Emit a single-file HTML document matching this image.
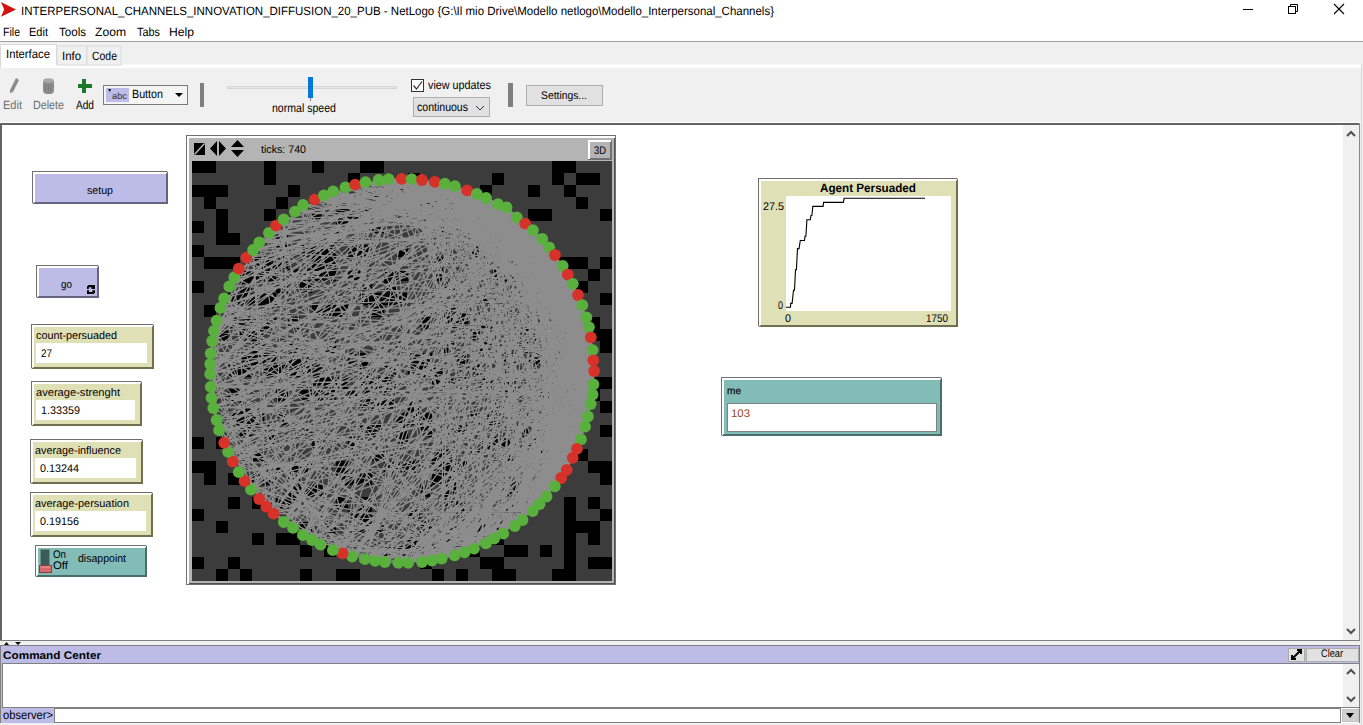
<!DOCTYPE html>
<html><head><meta charset="utf-8"><style>html,body{margin:0;padding:0;background:#fff;overflow:hidden}svg{display:block}</style></head>
<body><svg width="1363" height="725" viewBox="0 0 1363 725" shape-rendering="auto" text-rendering="geometricPrecision">
<rect x="0" y="0" width="1363" height="41" fill="#ffffff" />
<path d="M1,2 L16,9.5 L1,16.8 L4.2,9.5 Z" fill="#d41212"/>
<text x="21" y="15" font-size="12" font-family="Liberation Sans" font-weight="normal" fill="#000" textLength="753.0" lengthAdjust="spacingAndGlyphs" >INTERPERSONAL_CHANNELS_INNOVATION_DIFFUSION_20_PUB - NetLogo {G:\Il mio Drive\Modello netlogo\Modello_Interpersonal_Channels}</text>
<line x1="1243" y1="9.5" x2="1253" y2="9.5" stroke="#000" stroke-width="1"/>
<rect x="1288.5" y="6.5" width="7" height="7" fill="none" stroke="#000"/><path d="M1290.5,6.5 V4.5 H1297.5 V11.5 H1295.5" fill="none" stroke="#000"/>
<path d="M1334,4 L1344,14 M1344,4 L1334,14" stroke="#000" stroke-width="1.1"/>
<text x="3" y="36" font-size="12" font-family="Liberation Sans" font-weight="normal" fill="#000" textLength="17.0" lengthAdjust="spacingAndGlyphs" >File</text>
<text x="29" y="36" font-size="12" font-family="Liberation Sans" font-weight="normal" fill="#000" textLength="19.0" lengthAdjust="spacingAndGlyphs" >Edit</text>
<text x="59" y="36" font-size="12" font-family="Liberation Sans" font-weight="normal" fill="#000" textLength="27.0" lengthAdjust="spacingAndGlyphs" >Tools</text>
<text x="95" y="36" font-size="12" font-family="Liberation Sans" font-weight="normal" fill="#000" textLength="31.0" lengthAdjust="spacingAndGlyphs" >Zoom</text>
<text x="137" y="36" font-size="12" font-family="Liberation Sans" font-weight="normal" fill="#000" textLength="23.0" lengthAdjust="spacingAndGlyphs" >Tabs</text>
<text x="169" y="36" font-size="12" font-family="Liberation Sans" font-weight="normal" fill="#000" textLength="25.0" lengthAdjust="spacingAndGlyphs" >Help</text>
<rect x="0" y="41" width="1363" height="1" fill="#a0a0a0" />
<rect x="0" y="42" width="1363" height="26" fill="#f0f0f0" />
<rect x="0" y="64.5" width="1363" height="3.5" fill="#ffffff" />
<rect x="57" y="46" width="30" height="19" fill="#f0f0f0" stroke="#d9d9d9" stroke-width="1"/>
<rect x="87" y="46" width="34" height="19" fill="#f0f0f0" stroke="#d9d9d9" stroke-width="1"/>
<path d="M0.5,68 V44.5 H56.5 V68" fill="#ffffff" stroke="#d9d9d9"/>
<rect x="1" y="65" width="56" height="3" fill="#ffffff" />
<text x="6" y="58" font-size="12" font-family="Liberation Sans" font-weight="normal" fill="#000" textLength="44.0" lengthAdjust="spacingAndGlyphs" >Interface</text>
<text x="62" y="60" font-size="12" font-family="Liberation Sans" font-weight="normal" fill="#000" textLength="19.0" lengthAdjust="spacingAndGlyphs" >Info</text>
<text x="92" y="60" font-size="12" font-family="Liberation Sans" font-weight="normal" fill="#000" textLength="25.0" lengthAdjust="spacingAndGlyphs" >Code</text>
<rect x="0" y="68" width="1363" height="55" fill="#f0f0f0" />
<rect x="0" y="122" width="1363" height="1" fill="#ffffff" />
<path d="M16,78 L19,80 L13,92 L10,93 L10,90 Z" fill="#8c8c8c"/>
<rect x="43" y="79" width="11" height="15" rx="4" fill="#8c8c8c"/><ellipse cx="48.5" cy="80.5" rx="5" ry="2.3" fill="#a8a8a8"/><path d="M46,84 V92 M48.5,84 V92 M51,84 V92" stroke="#7a7a7a" stroke-width="0.8"/>
<rect x="82" y="79" width="4" height="14" fill="#1a7a28" />
<rect x="78" y="84" width="14" height="4" fill="#1a7a28" />
<text x="3" y="109" font-size="12" font-family="Liberation Sans" font-weight="normal" fill="#6d6d6d" textLength="19.0" lengthAdjust="spacingAndGlyphs" >Edit</text>
<text x="33" y="109" font-size="12" font-family="Liberation Sans" font-weight="normal" fill="#6d6d6d" textLength="31.0" lengthAdjust="spacingAndGlyphs" >Delete</text>
<text x="76" y="109" font-size="12" font-family="Liberation Sans" font-weight="normal" fill="#000" textLength="18.0" lengthAdjust="spacingAndGlyphs" >Add</text>
<rect x="103.5" y="85.5" width="84" height="19" fill="#f4f4f4" stroke="#7a7a7a"/>
<rect x="106" y="88" width="23" height="14" fill="#bcbce6" />
<path d="M108,89 L111,89 L110,92 Z" fill="#000"/>
<text x="112" y="99" font-size="9" font-family="Liberation Sans" font-weight="normal" fill="#333" textLength="15.0" lengthAdjust="spacingAndGlyphs" >abc</text>
<text x="132" y="98" font-size="12" font-family="Liberation Sans" font-weight="normal" fill="#000" textLength="31.0" lengthAdjust="spacingAndGlyphs" >Button</text>
<path d="M175,93 L183,93 L179,97 Z" fill="#000"/>
<rect x="200" y="83" width="4" height="24" fill="#808080" />
<rect x="227.5" y="86.5" width="169" height="2" fill="#e7e7e7" stroke="#d6d6d6"/>
<rect x="308" y="77" width="5" height="21" fill="#0078d7" />
<rect x="310" y="98" width="1" height="3" fill="#808080" />
<text x="272" y="112" font-size="12" font-family="Liberation Sans" font-weight="normal" fill="#000" textLength="64.0" lengthAdjust="spacingAndGlyphs" >normal speed</text>
<rect x="411.5" y="79.5" width="12" height="12" fill="#ffffff" stroke="#333"/>
<path d="M413.5,85.5 L416.5,89 L422,81.5" fill="none" stroke="#333" stroke-width="1.2"/>
<text x="428" y="89" font-size="12" font-family="Liberation Sans" font-weight="normal" fill="#000" textLength="63.0" lengthAdjust="spacingAndGlyphs" >view updates</text>
<rect x="413.5" y="97.5" width="76" height="19" fill="#e1e1e1" stroke="#adadad"/>
<text x="417" y="111" font-size="12" font-family="Liberation Sans" font-weight="normal" fill="#000" textLength="51.0" lengthAdjust="spacingAndGlyphs" >continuous</text>
<path d="M476,106 L480,110 L484,106" fill="none" stroke="#333" stroke-width="1"/>
<rect x="508" y="83" width="5" height="24" fill="#808080" />
<rect x="526.5" y="85.5" width="76" height="20" fill="#e1e1e1" stroke="#adadad"/>
<text x="541" y="99" font-size="11" font-family="Liberation Sans" font-weight="normal" fill="#000" textLength="46.0" lengthAdjust="spacingAndGlyphs" >Settings...</text>
<rect x="0" y="123" width="1360" height="518" fill="#ffffff" />
<rect x="0" y="123" width="1360" height="2" fill="#646464" />
<rect x="0" y="123" width="2" height="518" fill="#646464" />
<rect x="1359" y="123" width="1" height="518" fill="#808890" />
<rect x="0" y="640" width="1360" height="1" fill="#808080" />
<rect x="1343" y="125" width="16" height="515" fill="#f0f0f0" />
<path d="M1347,136 L1351,132 L1355,136" fill="none" stroke="#505050" stroke-width="2"/>
<path d="M1347,629 L1351,633 L1355,629" fill="none" stroke="#505050" stroke-width="2"/>
<rect x="1360" y="123" width="3" height="602" fill="#f0f0f0" />
<rect x="32" y="171" width="136" height="33" fill="#646482" />
<path d="M32,171 H168 L166,174 H35 V202 L32,204 Z" fill="#ffffff"/>
<rect x="32" y="171" width="135" height="1" fill="#707070" />
<rect x="32" y="171" width="1" height="32" fill="#707070" />
<rect x="35" y="174" width="131" height="28" fill="#bcbce6" />
<text x="87" y="194" font-size="11" font-family="Liberation Sans" font-weight="normal" fill="#000" textLength="26.0" lengthAdjust="spacingAndGlyphs" >setup</text>
<rect x="36" y="265" width="63" height="33" fill="#646482" />
<path d="M36,265 H99 L97,268 H39 V296 L36,298 Z" fill="#ffffff"/>
<rect x="36" y="265" width="62" height="1" fill="#707070" />
<rect x="36" y="265" width="1" height="32" fill="#707070" />
<rect x="39" y="268" width="58" height="28" fill="#bcbce6" />
<text x="61" y="288" font-size="11" font-family="Liberation Sans" font-weight="normal" fill="#000" textLength="11.0" lengthAdjust="spacingAndGlyphs" >go</text>
<path d="M87,289 V286.5 L88.5,285 H95 V289 H91.5 V287.3 H88.8 V289 Z M87,294 V290.3 H89 V292 H92.5 V290.2 H95 V292.5 L93.5,294 Z" fill="#000"/>
<rect x="31" y="324" width="123" height="45" fill="#707050" />
<path d="M31,324 H154 L152,327 H34 V367 L31,369 Z" fill="#ffffff"/>
<rect x="31" y="324" width="122" height="1" fill="#707070" />
<rect x="31" y="324" width="1" height="44" fill="#707070" />
<rect x="34" y="327" width="118" height="40" fill="#e0e0b6" />
<rect x="36" y="343" width="111" height="20" fill="#ffffff" />
<text x="36" y="339" font-size="11" font-family="Liberation Sans" font-weight="normal" fill="#000" textLength="81.0" lengthAdjust="spacingAndGlyphs" >count-persuaded</text>
<text x="41" y="357" font-size="11" font-family="Liberation Sans" font-weight="normal" fill="#000" textLength="11.0" lengthAdjust="spacingAndGlyphs" >27</text>
<rect x="31" y="381" width="111" height="45" fill="#707050" />
<path d="M31,381 H142 L140,384 H34 V424 L31,426 Z" fill="#ffffff"/>
<rect x="31" y="381" width="110" height="1" fill="#707070" />
<rect x="31" y="381" width="1" height="44" fill="#707070" />
<rect x="34" y="384" width="106" height="40" fill="#e0e0b6" />
<rect x="36" y="400" width="99" height="20" fill="#ffffff" />
<text x="36" y="396" font-size="11" font-family="Liberation Sans" font-weight="normal" fill="#000" textLength="84.0" lengthAdjust="spacingAndGlyphs" >average-strenght</text>
<text x="41" y="414" font-size="11" font-family="Liberation Sans" font-weight="normal" fill="#000" textLength="39.0" lengthAdjust="spacingAndGlyphs" >1.33359</text>
<rect x="30" y="439" width="113" height="45" fill="#707050" />
<path d="M30,439 H143 L141,442 H33 V482 L30,484 Z" fill="#ffffff"/>
<rect x="30" y="439" width="112" height="1" fill="#707070" />
<rect x="30" y="439" width="1" height="44" fill="#707070" />
<rect x="33" y="442" width="108" height="40" fill="#e0e0b6" />
<rect x="35" y="458" width="101" height="20" fill="#ffffff" />
<text x="35" y="454" font-size="11" font-family="Liberation Sans" font-weight="normal" fill="#000" textLength="86.0" lengthAdjust="spacingAndGlyphs" >average-influence</text>
<text x="40" y="472" font-size="11" font-family="Liberation Sans" font-weight="normal" fill="#000" textLength="39.0" lengthAdjust="spacingAndGlyphs" >0.13244</text>
<rect x="30" y="492" width="123" height="45" fill="#707050" />
<path d="M30,492 H153 L151,495 H33 V535 L30,537 Z" fill="#ffffff"/>
<rect x="30" y="492" width="122" height="1" fill="#707070" />
<rect x="30" y="492" width="1" height="44" fill="#707070" />
<rect x="33" y="495" width="118" height="40" fill="#e0e0b6" />
<rect x="35" y="511" width="111" height="20" fill="#ffffff" />
<text x="35" y="507" font-size="11" font-family="Liberation Sans" font-weight="normal" fill="#000" textLength="94.0" lengthAdjust="spacingAndGlyphs" >average-persuation</text>
<text x="40" y="525" font-size="11" font-family="Liberation Sans" font-weight="normal" fill="#000" textLength="39.0" lengthAdjust="spacingAndGlyphs" >0.19156</text>
<rect x="35" y="545" width="112" height="32" fill="#4a6e6a" />
<path d="M35,545 H147 L145,548 H38 V575 L35,577 Z" fill="#ffffff"/>
<rect x="35" y="545" width="111" height="1" fill="#707070" />
<rect x="35" y="545" width="1" height="31" fill="#707070" />
<rect x="38" y="548" width="107" height="27" fill="#82bcb7" />
<rect x="40.5" y="549.5" width="9" height="17" fill="#3a5c58" stroke="#6a8e8a" stroke-width="1"/>
<rect x="39.5" y="565.5" width="12" height="7" fill="#d46a6a" stroke="#8c3c3c" stroke-width="1"/>
<rect x="40.5" y="566.5" width="10" height="1" fill="#e89a9a" />
<text x="53" y="558" font-size="11" font-family="Liberation Sans" font-weight="normal" fill="#000" textLength="13.0" lengthAdjust="spacingAndGlyphs" >On</text>
<text x="53" y="569" font-size="11" font-family="Liberation Sans" font-weight="normal" fill="#000" textLength="15.0" lengthAdjust="spacingAndGlyphs" >Off</text>
<text x="78" y="562" font-size="11" font-family="Liberation Sans" font-weight="normal" fill="#000" textLength="48.0" lengthAdjust="spacingAndGlyphs" >disappoint</text>
<rect x="186" y="135" width="430" height="450" fill="#707070" />
<rect x="187" y="136" width="428" height="448" fill="#ffffff" />
<rect x="189" y="138" width="426" height="446" fill="#505050" />
<rect x="189" y="138" width="425" height="445" fill="#b4b4b4" />
<path d="M194,143 H205 V155 H194 Z" fill="#000"/><path d="M194.5,154.5 L204.5,143.5" stroke="#b4b4b4" stroke-width="1.5"/>
<path d="M210,148.5 L217,141 V156 Z M219,141 L226,148.5 L219,156 Z" fill="#000"/>
<path d="M237.5,140 L244,147 H231 Z M231,150 H244 L237.5,157 Z" fill="#000"/>
<text x="261" y="153" font-size="11" font-family="Liberation Sans" font-weight="normal" fill="#000" textLength="45.0" lengthAdjust="spacingAndGlyphs" >ticks: 740</text>
<rect x="588" y="140" width="24" height="20" fill="#707070" />
<rect x="588" y="140" width="23" height="19" fill="#ffffff" />
<rect x="590" y="142" width="22" height="18" fill="#707070" />
<rect x="590" y="142" width="20" height="16" fill="#b4b4b4" />
<text x="594" y="154" font-size="11" font-family="Liberation Sans" font-weight="normal" fill="#000" textLength="12.0" lengthAdjust="spacingAndGlyphs" >3D</text>
<rect x="192" y="161" width="420" height="420" fill="#3c3c3c" />
<path d="M192,161h12v12h-12zM204,161h12v12h-12zM264,161h12v12h-12zM312,161h12v12h-12zM360,161h12v12h-12zM372,161h12v12h-12zM552,161h12v12h-12zM564,161h12v12h-12zM264,173h12v12h-12zM348,173h12v12h-12zM408,173h12v12h-12zM492,173h12v12h-12zM552,173h12v12h-12zM576,173h12v12h-12zM588,173h12v12h-12zM192,185h12v12h-12zM204,185h12v12h-12zM216,185h12v12h-12zM288,185h12v12h-12zM372,185h12v12h-12zM396,185h12v12h-12zM432,185h12v12h-12zM480,185h12v12h-12zM528,185h12v12h-12zM564,185h12v12h-12zM204,197h12v12h-12zM276,197h12v12h-12zM336,197h12v12h-12zM360,197h12v12h-12zM372,197h12v12h-12zM408,197h12v12h-12zM420,197h12v12h-12zM576,197h12v12h-12zM216,209h12v12h-12zM264,209h12v12h-12zM312,209h12v12h-12zM336,209h12v12h-12zM348,209h12v12h-12zM360,209h12v12h-12zM396,209h12v12h-12zM456,209h12v12h-12zM468,209h12v12h-12zM480,209h12v12h-12zM528,209h12v12h-12zM540,209h12v12h-12zM600,209h12v12h-12zM192,221h12v12h-12zM216,221h12v12h-12zM336,221h12v12h-12zM372,221h12v12h-12zM432,221h12v12h-12zM456,221h12v12h-12zM492,221h12v12h-12zM216,233h12v12h-12zM228,233h12v12h-12zM276,233h12v12h-12zM444,233h12v12h-12zM504,233h12v12h-12zM192,245h12v12h-12zM276,245h12v12h-12zM300,245h12v12h-12zM312,245h12v12h-12zM324,245h12v12h-12zM348,245h12v12h-12zM360,245h12v12h-12zM396,245h12v12h-12zM468,245h12v12h-12zM528,245h12v12h-12zM204,257h12v12h-12zM216,257h12v12h-12zM228,257h12v12h-12zM252,257h12v12h-12zM264,257h12v12h-12zM276,257h12v12h-12zM312,257h12v12h-12zM324,257h12v12h-12zM432,257h12v12h-12zM516,257h12v12h-12zM540,257h12v12h-12zM552,257h12v12h-12zM564,257h12v12h-12zM576,257h12v12h-12zM600,257h12v12h-12zM240,269h12v12h-12zM252,269h12v12h-12zM264,269h12v12h-12zM288,269h12v12h-12zM300,269h12v12h-12zM312,269h12v12h-12zM324,269h12v12h-12zM348,269h12v12h-12zM384,269h12v12h-12zM396,269h12v12h-12zM432,269h12v12h-12zM492,269h12v12h-12zM504,269h12v12h-12zM528,269h12v12h-12zM552,269h12v12h-12zM588,269h12v12h-12zM192,281h12v12h-12zM240,281h12v12h-12zM276,281h12v12h-12zM300,281h12v12h-12zM360,281h12v12h-12zM384,281h12v12h-12zM444,281h12v12h-12zM528,281h12v12h-12zM576,281h12v12h-12zM228,293h12v12h-12zM240,293h12v12h-12zM252,293h12v12h-12zM264,293h12v12h-12zM360,293h12v12h-12zM372,293h12v12h-12zM384,293h12v12h-12zM396,293h12v12h-12zM480,293h12v12h-12zM552,293h12v12h-12zM600,293h12v12h-12zM204,305h12v12h-12zM312,305h12v12h-12zM324,305h12v12h-12zM336,305h12v12h-12zM372,305h12v12h-12zM444,305h12v12h-12zM456,305h12v12h-12zM552,305h12v12h-12zM564,305h12v12h-12zM228,317h12v12h-12zM240,317h12v12h-12zM264,317h12v12h-12zM288,317h12v12h-12zM420,317h12v12h-12zM444,317h12v12h-12zM456,317h12v12h-12zM480,317h12v12h-12zM588,317h12v12h-12zM216,329h12v12h-12zM240,329h12v12h-12zM252,329h12v12h-12zM468,329h12v12h-12zM516,329h12v12h-12zM528,329h12v12h-12zM552,329h12v12h-12zM564,329h12v12h-12zM576,329h12v12h-12zM588,329h12v12h-12zM600,329h12v12h-12zM252,341h12v12h-12zM288,341h12v12h-12zM324,341h12v12h-12zM396,341h12v12h-12zM444,341h12v12h-12zM480,341h12v12h-12zM516,341h12v12h-12zM564,341h12v12h-12zM600,341h12v12h-12zM240,353h12v12h-12zM252,353h12v12h-12zM264,353h12v12h-12zM288,353h12v12h-12zM300,353h12v12h-12zM348,353h12v12h-12zM360,353h12v12h-12zM408,353h12v12h-12zM420,353h12v12h-12zM456,353h12v12h-12zM504,353h12v12h-12zM528,353h12v12h-12zM228,365h12v12h-12zM240,365h12v12h-12zM264,365h12v12h-12zM276,365h12v12h-12zM288,365h12v12h-12zM300,365h12v12h-12zM312,365h12v12h-12zM360,365h12v12h-12zM384,365h12v12h-12zM408,365h12v12h-12zM420,365h12v12h-12zM432,365h12v12h-12zM468,365h12v12h-12zM504,365h12v12h-12zM312,377h12v12h-12zM324,377h12v12h-12zM336,377h12v12h-12zM360,377h12v12h-12zM372,377h12v12h-12zM384,377h12v12h-12zM432,377h12v12h-12zM444,377h12v12h-12zM456,377h12v12h-12zM480,377h12v12h-12zM504,377h12v12h-12zM552,377h12v12h-12zM588,377h12v12h-12zM600,377h12v12h-12zM228,389h12v12h-12zM276,389h12v12h-12zM300,389h12v12h-12zM312,389h12v12h-12zM324,389h12v12h-12zM348,389h12v12h-12zM360,389h12v12h-12zM384,389h12v12h-12zM504,389h12v12h-12zM540,389h12v12h-12zM588,389h12v12h-12zM240,401h12v12h-12zM360,401h12v12h-12zM372,401h12v12h-12zM384,401h12v12h-12zM408,401h12v12h-12zM492,401h12v12h-12zM564,401h12v12h-12zM600,401h12v12h-12zM228,413h12v12h-12zM240,413h12v12h-12zM252,413h12v12h-12zM276,413h12v12h-12zM396,413h12v12h-12zM408,413h12v12h-12zM420,413h12v12h-12zM468,413h12v12h-12zM480,413h12v12h-12zM492,413h12v12h-12zM540,413h12v12h-12zM240,425h12v12h-12zM264,425h12v12h-12zM300,425h12v12h-12zM360,425h12v12h-12zM372,425h12v12h-12zM396,425h12v12h-12zM420,425h12v12h-12zM456,425h12v12h-12zM516,425h12v12h-12zM552,425h12v12h-12zM564,425h12v12h-12zM600,425h12v12h-12zM192,437h12v12h-12zM216,437h12v12h-12zM264,437h12v12h-12zM312,437h12v12h-12zM348,437h12v12h-12zM396,437h12v12h-12zM480,437h12v12h-12zM492,437h12v12h-12zM504,437h12v12h-12zM528,437h12v12h-12zM552,437h12v12h-12zM564,437h12v12h-12zM252,449h12v12h-12zM372,449h12v12h-12zM432,449h12v12h-12zM444,449h12v12h-12zM468,449h12v12h-12zM504,449h12v12h-12zM540,449h12v12h-12zM576,449h12v12h-12zM192,461h12v12h-12zM204,461h12v12h-12zM276,461h12v12h-12zM288,461h12v12h-12zM300,461h12v12h-12zM336,461h12v12h-12zM384,461h12v12h-12zM396,461h12v12h-12zM408,461h12v12h-12zM432,461h12v12h-12zM444,461h12v12h-12zM456,461h12v12h-12zM588,461h12v12h-12zM600,461h12v12h-12zM204,473h12v12h-12zM228,473h12v12h-12zM252,473h12v12h-12zM264,473h12v12h-12zM288,473h12v12h-12zM336,473h12v12h-12zM348,473h12v12h-12zM360,473h12v12h-12zM432,473h12v12h-12zM444,473h12v12h-12zM504,473h12v12h-12zM600,473h12v12h-12zM288,485h12v12h-12zM300,485h12v12h-12zM312,485h12v12h-12zM420,485h12v12h-12zM444,485h12v12h-12zM492,485h12v12h-12zM504,485h12v12h-12zM228,497h12v12h-12zM252,497h12v12h-12zM276,497h12v12h-12zM288,497h12v12h-12zM336,497h12v12h-12zM360,497h12v12h-12zM444,497h12v12h-12zM456,497h12v12h-12zM504,497h12v12h-12zM564,497h12v12h-12zM588,497h12v12h-12zM192,509h12v12h-12zM312,509h12v12h-12zM348,509h12v12h-12zM360,509h12v12h-12zM408,509h12v12h-12zM456,509h12v12h-12zM504,509h12v12h-12zM564,509h12v12h-12zM600,509h12v12h-12zM216,521h12v12h-12zM300,521h12v12h-12zM324,521h12v12h-12zM360,521h12v12h-12zM372,521h12v12h-12zM420,521h12v12h-12zM444,521h12v12h-12zM468,521h12v12h-12zM480,521h12v12h-12zM492,521h12v12h-12zM564,521h12v12h-12zM576,521h12v12h-12zM588,521h12v12h-12zM252,533h12v12h-12zM276,533h12v12h-12zM288,533h12v12h-12zM408,533h12v12h-12zM444,533h12v12h-12zM492,533h12v12h-12zM564,533h12v12h-12zM588,533h12v12h-12zM300,545h12v12h-12zM324,545h12v12h-12zM384,545h12v12h-12zM396,545h12v12h-12zM408,545h12v12h-12zM468,545h12v12h-12zM504,545h12v12h-12zM516,545h12v12h-12zM540,545h12v12h-12zM564,545h12v12h-12zM192,557h12v12h-12zM228,557h12v12h-12zM420,557h12v12h-12zM480,557h12v12h-12zM492,557h12v12h-12zM564,557h12v12h-12zM588,557h12v12h-12zM600,557h12v12h-12zM216,569h12v12h-12zM240,569h12v12h-12zM300,569h12v12h-12zM336,569h12v12h-12zM348,569h12v12h-12zM432,569h12v12h-12zM456,569h12v12h-12zM492,569h12v12h-12zM504,569h12v12h-12zM552,569h12v12h-12zM564,569h12v12h-12z" fill="#000"/>
<path d="M586.4,317.4L514.8,526.0M589.0,327.1L594.1,371.0M506.5,207.3L555.0,255.0M431.9,560.5L549.2,247.3M454.9,186.2L566.7,469.8M411.7,179.1L214.0,330.8M587.9,416.5L498.0,204.2M378.6,180.0L422.0,180.0M506.5,207.3L259.2,242.3M589.0,327.1L539.6,504.0M592.6,350.1L590.8,337.3M585.1,426.7L542.3,238.9M283.7,219.3L332.9,550.2M554.8,486.3L525.2,223.6M549.2,247.3L593.4,384.3M578.0,295.0L572.9,283.8M212.2,341.0L303.1,205.0M516.8,217.4L589.0,327.1M224.2,298.4L444.8,183.7M590.7,404.1L542.3,238.9M454.9,186.2L593.4,384.3M485.9,543.4L532.9,230.2M467.2,190.3L582.3,305.2M506.5,207.3L476.9,193.9M506.5,207.3L486.1,198.0M587.9,416.5L594.1,371.0M516.8,217.4L572.7,457.9M408.2,562.8L244.6,481.2M516.8,217.4L592.6,394.5M587.9,416.5L375.1,560.8M516.8,217.4L592.6,350.1M562.7,265.9L345.5,187.3M454.9,186.2L314.6,199.6M592.6,394.5L594.1,371.0M212.2,341.0L593.4,384.3M283.7,522.0L498.0,204.2M224.2,442.9L532.9,230.2M506.5,207.3L210.2,374.0M516.8,217.4L251.0,489.6M592.6,394.5L498.0,204.2M411.7,179.1L532.9,230.2M554.8,486.3L364.9,559.2M592.6,394.5L532.9,230.2M539.6,504.0L525.2,223.6M594.1,371.0L592.6,394.5M542.3,238.9L516.8,217.4M388.6,179.1L586.4,317.4M434.8,181.9L365.5,182.2M593.4,384.3L582.3,305.2M238.8,472.2L587.9,416.5M566.7,469.8L486.1,198.0M401.7,178.8L582.3,305.2M561.2,478.0L388.6,179.1M590.7,404.1L522.5,520.0M555.0,255.0L444.8,183.7M593.3,360.3L228.1,451.8M514.8,526.0L431.9,560.5M219.1,430.2L572.7,457.9M228.1,451.8L582.3,305.2M441.7,558.6L593.4,384.3M590.7,404.1L576.9,448.8M592.6,394.5L566.7,469.8M268.9,232.9L532.7,511.1M572.9,283.8L593.4,384.3M586.4,317.4L454.9,186.2M503.2,533.7L454.6,555.4M589.0,327.1L581.0,439.4M590.8,337.3L216.6,420.0M532.9,230.2L434.8,181.9M576.9,448.8L498.0,204.2M224.2,442.9L586.4,317.4M238.8,472.2L585.1,426.7M516.8,217.4L594.1,371.0M219.1,430.2L572.9,283.8M593.4,384.3L506.5,207.3M590.8,337.3L312.0,540.0M546.5,496.5L542.3,238.9M498.0,204.2L378.6,180.0M516.8,217.4L562.7,265.9M590.8,337.3L532.7,511.1M229.3,286.4L444.8,183.7M401.7,178.8L411.7,179.1M546.5,496.5L555.0,255.0M441.7,558.6L585.1,426.7M586.4,317.4L546.5,496.5M525.2,223.6L283.7,219.3M590.7,404.1L566.7,469.8M587.9,416.5L212.2,341.0M572.7,457.9L589.0,327.1M506.5,207.3L486.1,198.0M546.5,496.5L542.3,238.9M562.7,265.9L592.6,350.1M592.6,394.5L578.0,295.0M441.7,558.6L454.9,186.2M211.5,397.8L486.1,198.0M586.4,317.4L224.2,442.9M572.9,283.8L554.8,486.3M431.9,560.5L589.0,327.1M587.9,416.5L522.5,520.0M375.1,560.8L539.6,504.0M516.8,217.4L224.2,298.4M220.4,307.9L441.7,558.6M555.0,255.0L302.9,535.2M562.7,265.9L542.3,238.9M594.1,371.0L590.8,337.3M401.7,178.8L434.8,181.9M422.0,562.0L562.7,265.9M441.7,558.6L498.0,204.2M592.6,350.1L332.9,550.2M566.7,469.8L590.8,337.3M210.2,364.0L525.2,223.6M593.3,360.3L554.8,486.3M587.9,416.5L464.6,552.3M594.1,371.0L582.3,305.2M320.6,544.7L516.8,217.4M312.0,540.0L592.6,350.1M593.4,384.3L590.7,404.1M590.8,337.3L401.7,178.8M216.6,320.6L578.0,295.0M422.0,562.0L590.8,337.3M566.7,469.8L593.3,360.3M578.0,295.0L213.3,408.0M542.3,238.9L345.5,187.3M582.3,305.2L228.1,451.8M589.0,327.1L476.9,193.9M590.7,404.1L486.1,198.0M454.6,555.4L581.0,439.4M525.2,223.6L555.0,255.0M567.8,274.6L476.9,193.9M522.5,520.0L592.6,350.1M532.9,230.2L542.3,238.9M582.3,305.2L562.7,265.9M593.3,360.3L516.8,217.4M590.7,404.1L593.3,360.3M312.0,540.0L302.9,535.2M525.2,223.6L398.3,562.8M228.1,451.8L555.0,255.0M213.3,408.0L294.9,211.7M244.6,481.2L532.9,230.2M532.7,511.1L467.2,190.3M352.1,556.5L441.7,558.6M476.9,193.9L555.0,255.0M388.6,179.1L572.7,457.9M219.1,430.2L476.9,193.9M592.6,350.1L590.8,337.3M572.7,457.9L434.8,181.9M476.9,193.9L506.5,207.3M592.6,350.1L476.9,193.9M506.5,207.3L594.1,371.0M253.1,250.0L467.2,190.3M434.8,181.9L589.0,327.1M474.0,548.6L589.0,327.1M592.6,350.1L590.7,404.1M365.5,182.2L320.6,544.7M506.5,207.3L586.4,317.4M578.0,295.0L434.8,181.9M592.6,350.1L494.1,538.7M422.0,562.0L293.0,527.9M590.7,404.1L572.7,457.9M592.6,350.1L408.2,562.8M532.9,230.2L503.2,533.7M464.6,552.3L578.0,295.0M232.7,461.5L561.2,478.0M474.0,548.6L578.0,295.0M532.7,511.1L562.7,265.9M589.0,327.1L555.0,255.0M587.9,416.5L525.2,223.6M210.2,374.0L562.7,265.9M585.1,426.7L593.3,360.3M572.9,283.8L587.9,416.5M561.2,478.0L224.2,298.4M388.6,179.1L514.8,526.0M532.9,230.2L294.9,211.7M516.8,217.4L303.1,205.0M532.9,230.2L594.1,371.0M592.6,350.1L594.1,371.0M276.0,225.7L398.3,562.8M444.8,183.7L562.7,265.9M411.7,179.1L498.0,204.2M592.6,394.5L422.0,562.0M582.3,305.2L593.3,360.3M567.8,274.6L593.3,360.3M594.1,371.0L554.8,486.3M549.2,247.3L422.0,180.0M411.7,179.1L494.1,538.7M572.9,283.8L503.2,533.7M422.0,180.0L210.2,374.0M444.8,183.7L582.3,305.2M589.0,327.1L532.9,230.2M592.6,350.1L532.7,511.1M589.0,327.1L384.9,562.0M592.6,394.5L572.7,457.9M586.4,317.4L388.6,179.1M593.3,360.3L589.0,327.1M581.0,439.4L542.3,238.9M593.4,384.3L522.5,520.0M593.3,360.3L210.7,353.3M522.5,520.0L476.9,193.9M238.8,472.2L590.7,404.1M567.8,274.6L594.1,371.0M594.1,371.0L576.9,448.8M494.1,538.7L532.9,230.2M224.2,298.4L259.2,499.0M411.7,179.1L542.3,238.9M582.3,305.2L467.2,190.3M593.3,360.3L454.9,186.2M576.9,448.8L590.7,404.1M572.9,283.8L444.8,183.7M562.7,265.9L332.9,550.2M444.8,183.7L578.0,295.0M590.7,404.1L516.8,217.4M582.3,305.2L561.2,478.0M567.8,274.6L253.1,250.0M555.0,255.0L593.4,384.3M216.6,420.0L567.8,274.6M467.2,190.3L444.8,183.7M454.9,186.2L444.8,183.7M572.7,457.9L464.6,552.3M444.8,183.7L525.2,223.6M444.8,183.7L549.2,247.3M566.7,469.8L486.1,198.0M476.9,193.9L594.1,371.0M216.6,420.0L219.1,430.2M586.4,317.4L555.0,255.0M555.0,255.0L554.8,486.3M232.7,461.5L567.8,274.6M567.8,274.6L532.9,230.2M572.9,283.8L586.4,317.4M431.9,560.5L342.6,553.4M594.1,371.0L539.6,504.0M251.0,489.6L388.6,179.1M592.6,350.1L593.4,384.3M214.0,330.8L408.2,562.8M434.8,181.9L567.8,274.6M454.9,186.2L562.7,265.9M228.1,451.8L590.7,404.1M486.1,198.0L587.9,416.5M532.9,230.2L593.3,360.3M592.6,350.1L578.0,295.0M562.7,265.9L581.0,439.4M590.8,337.3L572.7,457.9M554.8,486.3L578.0,295.0M364.9,559.2L302.9,535.2M408.2,562.8L244.6,481.2M212.2,341.0L592.6,350.1M546.5,496.5L582.3,305.2M582.3,305.2L581.0,439.4M259.2,242.3L498.0,204.2M516.8,217.4L411.7,179.1M216.6,320.6L555.0,255.0M476.9,193.9L464.6,552.3M506.5,207.3L486.1,198.0M593.4,384.3L401.7,178.8M476.9,193.9L323.9,195.4M525.2,223.6L592.6,394.5M525.2,223.6L411.7,179.1M506.5,207.3L555.0,255.0M593.3,360.3L589.0,327.1M542.3,238.9L219.1,430.2M562.7,265.9L539.6,504.0M590.8,337.3L411.7,179.1M210.2,364.0L572.9,283.8M593.3,360.3L549.2,247.3M253.1,250.0L532.9,230.2M355.2,184.6L572.9,283.8M431.9,560.5L592.6,394.5M498.0,204.2L401.7,178.8M532.9,230.2L592.6,350.1M590.7,404.1L542.3,238.9M593.3,360.3L539.6,504.0M303.1,205.0L320.6,544.7M375.1,560.8L542.3,238.9M539.6,504.0L589.0,327.1M589.0,327.1L593.4,384.3M302.9,535.2L441.7,558.6M582.3,305.2L454.9,186.2M364.9,559.2L593.3,360.3M592.6,350.1L522.5,520.0M555.0,255.0L333.1,191.4M555.0,255.0L594.1,371.0M567.8,274.6L476.9,193.9M578.0,295.0L514.8,526.0M352.1,556.5L365.5,182.2M572.9,283.8L532.9,230.2M594.1,371.0L422.0,180.0M259.2,242.3L516.8,217.4M590.7,404.1L590.8,337.3M593.3,360.3L567.8,274.6M572.9,283.8L532.9,230.2M516.8,217.4L562.7,265.9M210.2,364.0L532.7,511.1M562.7,265.9L454.9,186.2M486.1,198.0L562.7,265.9M554.8,486.3L578.0,295.0M342.6,553.4L454.9,186.2M525.2,223.6L323.9,195.4M578.0,295.0L532.7,511.1M582.3,305.2L593.4,384.3M474.0,548.6L572.9,283.8M562.7,265.9L314.6,199.6M578.0,295.0L229.3,286.4M441.7,558.6L592.6,394.5M388.6,179.1L562.7,265.9M587.9,416.5L592.6,350.1M592.6,350.1L364.9,559.2M592.6,394.5L522.5,520.0M228.1,451.8L567.8,274.6M590.8,337.3L572.7,457.9M246.4,257.6L546.5,496.5M342.6,553.4L210.2,364.0M590.7,404.1L498.0,204.2M532.9,230.2L589.0,327.1M562.7,265.9L567.8,274.6M589.0,327.1L474.0,548.6M486.1,198.0L593.3,360.3M594.1,371.0L549.2,247.3M224.2,442.9L384.9,562.0M592.6,394.5L494.1,538.7M549.2,247.3L532.9,230.2M593.4,384.3L506.5,207.3M593.3,360.3L422.0,180.0M506.5,207.3L210.2,374.0M587.9,416.5L539.6,504.0M514.8,526.0L593.4,384.3M408.2,562.8L554.8,486.3M589.0,327.1L562.7,265.9M594.1,371.0L593.4,384.3M542.3,238.9L467.2,190.3M587.9,416.5L539.6,504.0M486.1,198.0L592.6,394.5M589.0,327.1L592.6,394.5M566.7,469.8L494.1,538.7M590.8,337.3L332.9,550.2M302.9,535.2L582.3,305.2M594.1,371.0L592.6,350.1M592.6,350.1L494.1,538.7M555.0,255.0L594.1,371.0M228.1,451.8L592.6,394.5M494.1,538.7L592.6,394.5M434.8,181.9L401.7,178.8M590.8,337.3L411.7,179.1M561.2,478.0L532.9,230.2M555.0,255.0L434.8,181.9M434.8,181.9L214.0,330.8M585.1,426.7L582.3,305.2M408.2,562.8L503.2,533.7M594.1,371.0L467.2,190.3M441.7,558.6L593.3,360.3M210.7,353.3L251.0,489.6M549.2,247.3L323.9,195.4M232.7,461.5L578.0,295.0M567.8,274.6L345.5,187.3M401.7,178.8L555.0,255.0M590.8,337.3L220.4,307.9M589.0,327.1L532.9,230.2M213.3,408.0L516.8,217.4M342.6,553.4L589.0,327.1M506.5,207.3L276.0,225.7M516.8,217.4L506.5,207.3M251.0,489.6L476.9,193.9M532.7,511.1L228.1,451.8M273.5,513.6L486.1,198.0M561.2,478.0L586.4,317.4M444.8,183.7L333.1,191.4M546.5,496.5L506.5,207.3M525.2,223.6L441.7,558.6M572.9,283.8L251.0,489.6M593.4,384.3L567.8,274.6M213.3,408.0L542.3,238.9M587.9,416.5L384.9,562.0M586.4,317.4L590.8,337.3M411.7,179.1L549.2,247.3M532.9,230.2L454.9,186.2M549.2,247.3L532.9,230.2M542.3,238.9L378.6,180.0M232.7,461.5L401.7,178.8M589.0,327.1L572.9,283.8M211.5,397.8L506.5,207.3M594.1,371.0L567.8,274.6M587.9,416.5L592.6,350.1M592.6,350.1L572.7,457.9M592.6,350.1L506.5,207.3M454.6,555.4L592.6,394.5M525.2,223.6L593.3,360.3M441.7,558.6L525.2,223.6M590.8,337.3L593.4,384.3M590.8,337.3L592.6,394.5M546.5,496.5L266.3,506.7M506.5,207.3L259.2,242.3M590.8,337.3L582.3,305.2M542.3,238.9L444.8,183.7M224.2,442.9L593.3,360.3M441.7,558.6L486.1,198.0M555.0,255.0L467.2,190.3M590.7,404.1L567.8,274.6M593.4,384.3L503.2,533.7M506.5,207.3L323.9,195.4M566.7,469.8L441.7,558.6M434.8,181.9L355.2,184.6M525.2,223.6L411.7,179.1M590.8,337.3L238.8,268.6M486.1,198.0L578.0,295.0M411.7,179.1L238.8,472.2M486.1,198.0L378.6,180.0M582.3,305.2L365.5,182.2M276.0,225.7L522.5,520.0M525.2,223.6L549.2,247.3M532.9,230.2L572.7,457.9M567.8,274.6L522.5,520.0M592.6,394.5L590.8,337.3M587.9,416.5L589.0,327.1M561.2,478.0L593.4,384.3M244.6,481.2L572.9,283.8M332.9,550.2L454.6,555.4M525.2,223.6L355.2,184.6M594.1,371.0L525.2,223.6M516.8,217.4L411.7,179.1M586.4,317.4L576.9,448.8M283.7,522.0L572.9,283.8M444.8,183.7L567.8,274.6M542.3,238.9L378.6,180.0M542.3,238.9L572.7,457.9M546.5,496.5L567.8,274.6M498.0,204.2L567.8,274.6M474.0,548.6L224.2,442.9M388.6,179.1L572.9,283.8M454.9,186.2L555.0,255.0M474.0,548.6L422.0,180.0M578.0,295.0L365.5,182.2M498.0,204.2L253.1,250.0M555.0,255.0L567.8,274.6M486.1,198.0L542.3,238.9M532.7,511.1L486.1,198.0M516.8,217.4L586.4,317.4M578.0,295.0L554.8,486.3M525.2,223.6L444.8,183.7M525.2,223.6L276.0,225.7M590.7,404.1L494.1,538.7M220.4,307.9L581.0,439.4M216.6,420.0L566.7,469.8M585.1,426.7L273.5,513.6M525.2,223.6L454.9,186.2M582.3,305.2L388.6,179.1M542.3,238.9L498.0,204.2M589.0,327.1L587.9,416.5M532.9,230.2L454.9,186.2M582.3,305.2L592.6,350.1M388.6,179.1L567.8,274.6M434.8,181.9L224.2,298.4M590.8,337.3L586.4,317.4M555.0,255.0L314.6,199.6M562.7,265.9L594.1,371.0M542.3,238.9L506.5,207.3M589.0,327.1L210.7,353.3M567.8,274.6L539.6,504.0M464.6,552.3L590.7,404.1M578.0,295.0L498.0,204.2M352.1,556.5L572.9,283.8M224.2,442.9L384.9,562.0M592.6,350.1L567.8,274.6M220.4,307.9L506.5,207.3M303.1,205.0L578.0,295.0M532.9,230.2L582.3,305.2M593.3,360.3L594.1,371.0M352.1,556.5L562.7,265.9M562.7,265.9L555.0,255.0M539.6,504.0L572.7,457.9M214.0,330.8L498.0,204.2M590.7,404.1L581.0,439.4M567.8,274.6L587.9,416.5M593.3,360.3L532.9,230.2M555.0,255.0L562.7,265.9M476.9,193.9L253.1,250.0M467.2,190.3L476.9,193.9M586.4,317.4L589.0,327.1M498.0,204.2L273.5,513.6M431.9,560.5L539.6,504.0M532.9,230.2L562.7,265.9M562.7,265.9L332.9,550.2M352.1,556.5L582.3,305.2M554.8,486.3L352.1,556.5M422.0,562.0L572.9,283.8M581.0,439.4L506.5,207.3M378.6,180.0L210.2,374.0M216.6,320.6L572.7,457.9M582.3,305.2L578.0,295.0M210.7,386.8L422.0,180.0M546.5,496.5L411.7,179.1M549.2,247.3L268.9,232.9M476.9,193.9L238.8,268.6M593.3,360.3L578.0,295.0M555.0,255.0L332.9,550.2M549.2,247.3L582.3,305.2M474.0,548.6L572.9,283.8M566.7,469.8L422.0,562.0M486.1,198.0L276.0,225.7M210.7,386.8L590.8,337.3M476.9,193.9L238.8,268.6M594.1,371.0L581.0,439.4M542.3,238.9L532.9,230.2M567.8,274.6L345.5,187.3M434.8,181.9L555.0,255.0M444.8,183.7L434.8,181.9M283.7,219.3L273.5,513.6M590.8,337.3L546.5,496.5M578.0,295.0L586.4,317.4M587.9,416.5L542.3,238.9M210.7,386.8L276.0,225.7M586.4,317.4L532.7,511.1M506.5,207.3L323.9,195.4M476.9,193.9L401.7,178.8M494.1,538.7L592.6,350.1M355.2,184.6L212.2,341.0M355.2,184.6L398.3,562.8M441.7,558.6L578.0,295.0M408.2,562.8L474.0,548.6M238.8,268.6L210.2,364.0M578.0,295.0L532.9,230.2M224.2,442.9L211.5,397.8M525.2,223.6L454.9,186.2M587.9,416.5L567.8,274.6M587.9,416.5L578.0,295.0M224.2,442.9L467.2,190.3M562.7,265.9L516.8,217.4M514.8,526.0L576.9,448.8M506.5,207.3L314.6,199.6M567.8,274.6L323.9,195.4M590.8,337.3L549.2,247.3M593.3,360.3L516.8,217.4M251.0,489.6L494.1,538.7M476.9,193.9L582.3,305.2M214.0,330.8L578.0,295.0M554.8,486.3L542.3,238.9M576.9,448.8L555.0,255.0M506.5,207.3L572.7,457.9M486.1,198.0L572.9,283.8M587.9,416.5L561.2,478.0M244.6,481.2L590.7,404.1M592.6,350.1L467.2,190.3M342.6,553.4L586.4,317.4M585.1,426.7L572.9,283.8M525.2,223.6L593.4,384.3M592.6,350.1L585.1,426.7M586.4,317.4L594.1,371.0M211.5,397.8L589.0,327.1M268.9,232.9L555.0,255.0M514.8,526.0L578.0,295.0M273.5,513.6L253.1,250.0M590.8,337.3L532.7,511.1M587.9,416.5L352.1,556.5M422.0,562.0L268.9,232.9M434.8,181.9L546.5,496.5M532.9,230.2L586.4,317.4M593.3,360.3L516.8,217.4M542.3,238.9L444.8,183.7M594.1,371.0L590.8,337.3M532.9,230.2L302.9,535.2M474.0,548.6L224.2,442.9M431.9,560.5L567.8,274.6M467.2,190.3L378.6,180.0M283.7,522.0L476.9,193.9M506.5,207.3L594.1,371.0M590.7,404.1L444.8,183.7M246.4,257.6L590.7,404.1M259.2,499.0L516.8,217.4M581.0,439.4L388.6,179.1M562.7,265.9L590.8,337.3M542.3,238.9L561.2,478.0M506.5,207.3L578.0,295.0M589.0,327.1L444.8,183.7M210.2,374.0L567.8,274.6M516.8,217.4L566.7,469.8M522.5,520.0L555.0,255.0M578.0,295.0L594.1,371.0M582.3,305.2L578.0,295.0M586.4,317.4L503.2,533.7M562.7,265.9L525.2,223.6M593.4,384.3L474.0,548.6M549.2,247.3L576.9,448.8M586.4,317.4L572.9,283.8M514.8,526.0L586.4,317.4M434.8,181.9L314.6,199.6M586.4,317.4L549.2,247.3M561.2,478.0L532.9,230.2M578.0,295.0L539.6,504.0M532.9,230.2L454.9,186.2M375.1,560.8L593.4,384.3M593.3,360.3L485.9,543.4M454.9,186.2L388.6,179.1M532.7,511.1L562.7,265.9M232.7,461.5L388.6,179.1M590.7,404.1L589.0,327.1M589.0,327.1L585.1,426.7M592.6,394.5L220.4,307.9M268.9,232.9L352.1,556.5M587.9,416.5L283.7,219.3M434.8,181.9L378.6,180.0M587.9,416.5L375.1,560.8M516.8,217.4L323.9,195.4M578.0,295.0L454.9,186.2M498.0,204.2L590.7,404.1M514.8,526.0L398.3,562.8M522.5,520.0L476.9,193.9M589.0,327.1L532.7,511.1M210.2,374.0L388.6,179.1M567.8,274.6L578.0,295.0M476.9,193.9L549.2,247.3M592.6,350.1L593.4,384.3M486.1,198.0L498.0,204.2M549.2,247.3L532.9,230.2M578.0,295.0L467.2,190.3M586.4,317.4L578.0,295.0M498.0,204.2L592.6,350.1M578.0,295.0L283.7,522.0M214.0,330.8L355.2,184.6M498.0,204.2L522.5,520.0M546.5,496.5L593.3,360.3M401.7,178.8L549.2,247.3M214.0,330.8L320.6,544.7M411.7,179.1L444.8,183.7M542.3,238.9L572.7,457.9M562.7,265.9L592.6,350.1M244.6,481.2L594.1,371.0M590.8,337.3L578.0,295.0M549.2,247.3L532.9,230.2M567.8,274.6L562.7,265.9M567.8,274.6L555.0,255.0M422.0,180.0L434.8,181.9M593.3,360.3L582.3,305.2M525.2,223.6L467.2,190.3M555.0,255.0L422.0,180.0M503.2,533.7L345.5,187.3M578.0,295.0L333.1,191.4M592.6,394.5L567.8,274.6M592.6,394.5L572.9,283.8M592.6,394.5L578.0,295.0M590.8,337.3L561.2,478.0M422.0,180.0L283.7,219.3M542.3,238.9L582.3,305.2M293.0,527.9L549.2,247.3M576.9,448.8L234.4,277.2M352.1,556.5L555.0,255.0M375.1,560.8L587.9,416.5M422.0,180.0L411.7,179.1M590.7,404.1L422.0,562.0M587.9,416.5L408.2,562.8M494.1,538.7L323.9,195.4M514.8,526.0L576.9,448.8M234.4,277.2L444.8,183.7M454.6,555.4L494.1,538.7M572.9,283.8L555.0,255.0M476.9,193.9L572.9,283.8M444.8,183.7L582.3,305.2M585.1,426.7L476.9,193.9M476.9,193.9L590.7,404.1M594.1,371.0L516.8,217.4M578.0,295.0L561.2,478.0M476.9,193.9L589.0,327.1M401.7,178.8L572.9,283.8M576.9,448.8L590.8,337.3M566.7,469.8L454.6,555.4M476.9,193.9L498.0,204.2M593.4,384.3L578.0,295.0M498.0,204.2L542.3,238.9M592.6,350.1L592.6,394.5M332.9,550.2L593.4,384.3M589.0,327.1L562.7,265.9M561.2,478.0L542.3,238.9M522.5,520.0L532.9,230.2M434.8,181.9L572.9,283.8M539.6,504.0L590.7,404.1M594.1,371.0L224.2,442.9M586.4,317.4L498.0,204.2M494.1,538.7L555.0,255.0M320.6,544.7L238.8,472.2M594.1,371.0L572.9,283.8M498.0,204.2L474.0,548.6M408.2,562.8L454.6,555.4M525.2,223.6L542.3,238.9M592.6,394.5L522.5,520.0M593.4,384.3L213.3,408.0M566.7,469.8L210.7,353.3M539.6,504.0L302.9,535.2M532.7,511.1L532.9,230.2M388.6,179.1L532.9,230.2M549.2,247.3L355.2,184.6M590.8,337.3L532.9,230.2M542.3,238.9L581.0,439.4M498.0,204.2L302.9,535.2M592.6,394.5L532.7,511.1M593.3,360.3L216.6,420.0M464.6,552.3L422.0,180.0M210.7,386.8L441.7,558.6M525.2,223.6L454.9,186.2M532.7,511.1L592.6,350.1M594.1,371.0L532.9,230.2M210.2,364.0L210.2,374.0M587.9,416.5L431.9,560.5M467.2,190.3L268.9,232.9M253.1,250.0L266.3,506.7M401.7,178.8L229.3,286.4M572.7,457.9L454.6,555.4M592.6,350.1L593.3,360.3M506.5,207.3L422.0,180.0M590.8,337.3L576.9,448.8M582.3,305.2L401.7,178.8M590.8,337.3L464.6,552.3M594.1,371.0L562.7,265.9M562.7,265.9L210.7,386.8M220.4,307.9L213.3,408.0M293.0,527.9L388.6,179.1M590.8,337.3L581.0,439.4M592.6,394.5L211.5,397.8M454.9,186.2L593.4,384.3M401.7,178.8L273.5,513.6M212.2,341.0L342.6,553.4M352.1,556.5L592.6,350.1M593.4,384.3L398.3,562.8M303.1,205.0L431.9,560.5M220.4,307.9L578.0,295.0M562.7,265.9L314.6,199.6M474.0,548.6L593.4,384.3M592.6,350.1L576.9,448.8M586.4,317.4L532.7,511.1M506.5,207.3L365.5,182.2M589.0,327.1L562.7,265.9M532.9,230.2L542.3,238.9M592.6,350.1L503.2,533.7M506.5,207.3L401.7,178.8M562.7,265.9L576.9,448.8M441.7,558.6L444.8,183.7M485.9,543.4L525.2,223.6M578.0,295.0L567.8,274.6M567.8,274.6L253.1,250.0M572.9,283.8L581.0,439.4M454.6,555.4L441.7,558.6M572.9,283.8L590.8,337.3M514.8,526.0L375.1,560.8M378.6,180.0L572.9,283.8M434.8,181.9L486.1,198.0M516.8,217.4L212.2,341.0M486.1,198.0L210.2,364.0M506.5,207.3L572.9,283.8M251.0,489.6L210.2,364.0M586.4,317.4L434.8,181.9M542.3,238.9L444.8,183.7M506.5,207.3L268.9,232.9M555.0,255.0L365.5,182.2M593.3,360.3L592.6,394.5M485.9,543.4L210.2,364.0M444.8,183.7L238.8,268.6M555.0,255.0L213.3,408.0M590.8,337.3L549.2,247.3M594.1,371.0L522.5,520.0M216.6,320.6L592.6,394.5M320.6,544.7L506.5,207.3M210.2,374.0L388.6,179.1M485.9,543.4L422.0,180.0M498.0,204.2L582.3,305.2M516.8,217.4L365.5,182.2M422.0,562.0L587.9,416.5M589.0,327.1L378.6,180.0M555.0,255.0L444.8,183.7M590.7,404.1L593.4,384.3M590.7,404.1L589.0,327.1M251.0,489.6L582.3,305.2M593.3,360.3L562.7,265.9M219.1,430.2L210.7,386.8M312.0,540.0L498.0,204.2M592.6,350.1L549.2,247.3M506.5,207.3L525.2,223.6M593.4,384.3L431.9,560.5M549.2,247.3L590.8,337.3M213.3,408.0L572.9,283.8M303.1,205.0L542.3,238.9M593.4,384.3L589.0,327.1M454.9,186.2L444.8,183.7M587.9,416.5L542.3,238.9M586.4,317.4L561.2,478.0M525.2,223.6L422.0,562.0M532.9,230.2L590.8,337.3M582.3,305.2L514.8,526.0M590.8,337.3L532.9,230.2M332.9,550.2L562.7,265.9M516.8,217.4L593.4,384.3M408.2,562.8L216.6,420.0M572.7,457.9L546.5,496.5M398.3,562.8L506.5,207.3M384.9,562.0L532.9,230.2M216.6,420.0L213.3,408.0M562.7,265.9L592.6,394.5M219.1,430.2L587.9,416.5M434.8,181.9L476.9,193.9M229.3,286.4L555.0,255.0M506.5,207.3L485.9,543.4M238.8,268.6L476.9,193.9M532.7,511.1L273.5,513.6M474.0,548.6L266.3,506.7M594.1,371.0L587.9,416.5M590.8,337.3L562.7,265.9M388.6,179.1L431.9,560.5M525.2,223.6L464.6,552.3M566.7,469.8L555.0,255.0M542.3,238.9L582.3,305.2M572.7,457.9L562.7,265.9M213.3,408.0L549.2,247.3M210.7,353.3L214.0,330.8M464.6,552.3L542.3,238.9M592.6,350.1L422.0,180.0M283.7,522.0L589.0,327.1M503.2,533.7L516.8,217.4M593.4,384.3L572.9,283.8M434.8,181.9L355.2,184.6M593.3,360.3L587.9,416.5M578.0,295.0L476.9,193.9M589.0,327.1L476.9,193.9M582.3,305.2L485.9,543.4M594.1,371.0L210.7,386.8M228.1,451.8L593.3,360.3M283.7,219.3L506.5,207.3M474.0,548.6L498.0,204.2M594.1,371.0L554.8,486.3M532.7,511.1L474.0,548.6M587.9,416.5L586.4,317.4M582.3,305.2L578.0,295.0M210.7,353.3L422.0,180.0M444.8,183.7L542.3,238.9M586.4,317.4L567.8,274.6M593.4,384.3L578.0,295.0M587.9,416.5L590.7,404.1M411.7,179.1L486.1,198.0M422.0,180.0L216.6,320.6M444.8,183.7L422.0,180.0M476.9,193.9L312.0,540.0M590.8,337.3L549.2,247.3M234.4,277.2L555.0,255.0M525.2,223.6L592.6,350.1M578.0,295.0L546.5,496.5M532.9,230.2L554.8,486.3M586.4,317.4L572.9,283.8M586.4,317.4L593.4,384.3M578.0,295.0L576.9,448.8M586.4,317.4L532.7,511.1M586.4,317.4L522.5,520.0M220.4,307.9L578.0,295.0M581.0,439.4L549.2,247.3M532.7,511.1L587.9,416.5M581.0,439.4L587.9,416.5M525.2,223.6L593.3,360.3M224.2,298.4L546.5,496.5M388.6,179.1L474.0,548.6M532.9,230.2L525.2,223.6M578.0,295.0L516.8,217.4M219.1,430.2L593.4,384.3M375.1,560.8L572.9,283.8M593.4,384.3L485.9,543.4M503.2,533.7L532.9,230.2M554.8,486.3L593.3,360.3M246.4,257.6L454.6,555.4M555.0,255.0L210.2,364.0M542.3,238.9L555.0,255.0M590.8,337.3L590.7,404.1M232.7,461.5L549.2,247.3M408.2,562.8L486.1,198.0M592.6,394.5L587.9,416.5M259.2,242.3L210.7,353.3M567.8,274.6L444.8,183.7M549.2,247.3L566.7,469.8M352.1,556.5L542.3,238.9M567.8,274.6L333.1,191.4M572.9,283.8L498.0,204.2M555.0,255.0L210.7,386.8M532.9,230.2L333.1,191.4M454.9,186.2L514.8,526.0M542.3,238.9L590.8,337.3M401.7,178.8L293.0,527.9M516.8,217.4L561.2,478.0M562.7,265.9L525.2,223.6M589.0,327.1L578.0,295.0M398.3,562.8L592.6,394.5M246.4,257.6L525.2,223.6M590.7,404.1L408.2,562.8M562.7,265.9L542.3,238.9M364.9,559.2L576.9,448.8M506.5,207.3L578.0,295.0M525.2,223.6L266.3,506.7M525.2,223.6L378.6,180.0M539.6,504.0L441.7,558.6M434.8,181.9L593.3,360.3M593.4,384.3L454.9,186.2M567.8,274.6L592.6,394.5M283.7,522.0L467.2,190.3M388.6,179.1L506.5,207.3M542.3,238.9L561.2,478.0M555.0,255.0L454.9,186.2M594.1,371.0L578.0,295.0M532.9,230.2L411.7,179.1M388.6,179.1L593.4,384.3M542.3,238.9L585.1,426.7M589.0,327.1L532.9,230.2M244.6,481.2L590.7,404.1M587.9,416.5L590.8,337.3M589.0,327.1L592.6,350.1M441.7,558.6L525.2,223.6M388.6,179.1L401.7,178.8M431.9,560.5L549.2,247.3M506.5,207.3L342.6,553.4M572.7,457.9L503.2,533.7M586.4,317.4L592.6,350.1M251.0,489.6L216.6,420.0M342.6,553.4L532.9,230.2M216.6,320.6L592.6,350.1M555.0,255.0L592.6,350.1M253.1,250.0L268.9,232.9M378.6,180.0L572.9,283.8M587.9,416.5L576.9,448.8M210.2,374.0L485.9,543.4M593.4,384.3L525.2,223.6M589.0,327.1L576.9,448.8M525.2,223.6L542.3,238.9M562.7,265.9L590.8,337.3M388.6,179.1L587.9,416.5M516.8,217.4L590.8,337.3M562.7,265.9L594.1,371.0M467.2,190.3L542.3,238.9M384.9,562.0L485.9,543.4M422.0,180.0L562.7,265.9M486.1,198.0L246.4,257.6M498.0,204.2L585.1,426.7M555.0,255.0L585.1,426.7M506.5,207.3L592.6,394.5M210.7,386.8L210.7,353.3M572.9,283.8L532.9,230.2M546.5,496.5L590.8,337.3M216.6,320.6L542.3,238.9M216.6,420.0L434.8,181.9M506.5,207.3L388.6,179.1M320.6,544.7L224.2,298.4M581.0,439.4L572.9,283.8M539.6,504.0L422.0,180.0M590.8,337.3L592.6,350.1M422.0,180.0L593.3,360.3M572.9,283.8L411.7,179.1M593.4,384.3L506.5,207.3M590.8,337.3L561.2,478.0M594.1,371.0L516.8,217.4M532.7,511.1L283.7,522.0M401.7,178.8L589.0,327.1M320.6,544.7L503.2,533.7M485.9,543.4L422.0,180.0M364.9,559.2L498.0,204.2M411.7,179.1L578.0,295.0M572.9,283.8L355.2,184.6M320.6,544.7L216.6,420.0M401.7,178.8L549.2,247.3M506.5,207.3L345.5,187.3M587.9,416.5L542.3,238.9M593.3,360.3L486.1,198.0M594.1,371.0L582.3,305.2M589.0,327.1L592.6,394.5M516.8,217.4L259.2,242.3M244.6,481.2L572.9,283.8M593.3,360.3L486.1,198.0M554.8,486.3L411.7,179.1M549.2,247.3L593.4,384.3M454.6,555.4L213.3,408.0M506.5,207.3L593.4,384.3M474.0,548.6L224.2,298.4M514.8,526.0L567.8,274.6M592.6,394.5L232.7,461.5M593.4,384.3L294.9,211.7M332.9,550.2L212.2,341.0M486.1,198.0L516.8,217.4M486.1,198.0L434.8,181.9M590.7,404.1L582.3,305.2M592.6,394.5L593.3,360.3M302.9,535.2L542.3,238.9M567.8,274.6L506.5,207.3M312.0,540.0L594.1,371.0M562.7,265.9L314.6,199.6M314.6,199.6L542.3,238.9M259.2,242.3L434.8,181.9M539.6,504.0L589.0,327.1M532.7,511.1L210.7,386.8M582.3,305.2L555.0,255.0M555.0,255.0L589.0,327.1M572.7,457.9L454.6,555.4M214.0,330.8L590.7,404.1M498.0,204.2L454.9,186.2M506.5,207.3L593.4,384.3M576.9,448.8L422.0,180.0M467.2,190.3L444.8,183.7M364.9,559.2L593.3,360.3M302.9,535.2L476.9,193.9M587.9,416.5L562.7,265.9M401.7,178.8L434.8,181.9M593.3,360.3L587.9,416.5M364.9,559.2L476.9,193.9M581.0,439.4L251.0,489.6M594.1,371.0L494.1,538.7M576.9,448.8L549.2,247.3M464.6,552.3L589.0,327.1M355.2,184.6L542.3,238.9M592.6,394.5L590.7,404.1M422.0,180.0L476.9,193.9M572.7,457.9L431.9,560.5M408.2,562.8L216.6,420.0M590.8,337.3L589.0,327.1M567.8,274.6L411.7,179.1M578.0,295.0L592.6,394.5M498.0,204.2L454.9,186.2M592.6,394.5L586.4,317.4M549.2,247.3L572.7,457.9M516.8,217.4L587.9,416.5M590.8,337.3L467.2,190.3M238.8,472.2L434.8,181.9M576.9,448.8L586.4,317.4M592.6,394.5L431.9,560.5M562.7,265.9L587.9,416.5M476.9,193.9L549.2,247.3M589.0,327.1L441.7,558.6M516.8,217.4L555.0,255.0M589.0,327.1L503.2,533.7M516.8,217.4L444.8,183.7M213.3,408.0L590.7,404.1M555.0,255.0L228.1,451.8M486.1,198.0L587.9,416.5M283.7,522.0L594.1,371.0M555.0,255.0L593.4,384.3M485.9,543.4L582.3,305.2M561.2,478.0L589.0,327.1M476.9,193.9L294.9,211.7M364.9,559.2L587.9,416.5M567.8,274.6L422.0,180.0M220.4,307.9L486.1,198.0M554.8,486.3L592.6,394.5M474.0,548.6L259.2,499.0M216.6,320.6L587.9,416.5M572.9,283.8L525.2,223.6M587.9,416.5L590.8,337.3M320.6,544.7L576.9,448.8M320.6,544.7L587.9,416.5M532.9,230.2L323.9,195.4M422.0,562.0L549.2,247.3M572.9,283.8L411.7,179.1M587.9,416.5L454.9,186.2M532.9,230.2L525.2,223.6M259.2,499.0L589.0,327.1M516.8,217.4L476.9,193.9M542.3,238.9L401.7,178.8M587.9,416.5L555.0,255.0M506.5,207.3L283.7,219.3M441.7,558.6L378.6,180.0M586.4,317.4L532.9,230.2M401.7,178.8L567.8,274.6M216.6,320.6L213.3,408.0M273.5,513.6L476.9,193.9M398.3,562.8L594.1,371.0M467.2,190.3L422.0,180.0M498.0,204.2L593.4,384.3M232.7,461.5L485.9,543.4M587.9,416.5L494.1,538.7M581.0,439.4L593.3,360.3M578.0,295.0L587.9,416.5M566.7,469.8L441.7,558.6M364.9,559.2L486.1,198.0M411.7,179.1L212.2,341.0M555.0,255.0L542.3,238.9M594.1,371.0L532.7,511.1M562.7,265.9L408.2,562.8M303.1,205.0L467.2,190.3M251.0,489.6L542.3,238.9M474.0,548.6L581.0,439.4M578.0,295.0L454.9,186.2M589.0,327.1L585.1,426.7M476.9,193.9L314.6,199.6M593.3,360.3L411.7,179.1M246.4,257.6L572.9,283.8M498.0,204.2L220.4,307.9M506.5,207.3L375.1,560.8M210.7,386.8L476.9,193.9M498.0,204.2L592.6,394.5M224.2,442.9L486.1,198.0M567.8,274.6L592.6,350.1M539.6,504.0L582.3,305.2M586.4,317.4L555.0,255.0M586.4,317.4L546.5,496.5M562.7,265.9L388.6,179.1M411.7,179.1L567.8,274.6M401.7,178.8L582.3,305.2M210.2,374.0L401.7,178.8M555.0,255.0L467.2,190.3M486.1,198.0L592.6,350.1M572.9,283.8L388.6,179.1M378.6,180.0L525.2,223.6M532.7,511.1L454.9,186.2M506.5,207.3L589.0,327.1M514.8,526.0L586.4,317.4M567.8,274.6L581.0,439.4M542.3,238.9L216.6,420.0M592.6,394.5L210.7,386.8M506.5,207.3L516.8,217.4M408.2,562.8L549.2,247.3M586.4,317.4L572.7,457.9M516.8,217.4L283.7,522.0M592.6,350.1L542.3,238.9M549.2,247.3L561.2,478.0M592.6,394.5L444.8,183.7M532.9,230.2L562.7,265.9M525.2,223.6L283.7,219.3M578.0,295.0L549.2,247.3M594.1,371.0L422.0,180.0M576.9,448.8L590.8,337.3M572.9,283.8L355.2,184.6M549.2,247.3L355.2,184.6M401.7,178.8L388.6,179.1M259.2,499.0L586.4,317.4M592.6,350.1L454.9,186.2M454.6,555.4L590.8,337.3M562.7,265.9L590.8,337.3M441.7,558.6L232.7,461.5M532.7,511.1L589.0,327.1M593.3,360.3L594.1,371.0M375.1,560.8L422.0,180.0M494.1,538.7L592.6,394.5M224.2,442.9L228.1,451.8M572.9,283.8L498.0,204.2M594.1,371.0L539.6,504.0M590.8,337.3L555.0,255.0M251.0,489.6L384.9,562.0M522.5,520.0L464.6,552.3M542.3,238.9L592.6,350.1M522.5,520.0L210.7,386.8M593.3,360.3L592.6,350.1M562.7,265.9L566.7,469.8M210.7,386.8L586.4,317.4M542.3,238.9L476.9,193.9M562.7,265.9L555.0,255.0M582.3,305.2L514.8,526.0M211.5,397.8L352.1,556.5M525.2,223.6L506.5,207.3M587.9,416.5L567.8,274.6M259.2,242.3L388.6,179.1M454.9,186.2L562.7,265.9M332.9,550.2L474.0,548.6M532.9,230.2L232.7,461.5M542.3,238.9L554.8,486.3M216.6,320.6L589.0,327.1M503.2,533.7L592.6,350.1M542.3,238.9L586.4,317.4M555.0,255.0L486.1,198.0M216.6,320.6L525.2,223.6M212.2,341.0L213.3,408.0M332.9,550.2L375.1,560.8M594.1,371.0L546.5,496.5M342.6,553.4L411.7,179.1M434.8,181.9L590.8,337.3M232.7,461.5L586.4,317.4M576.9,448.8L566.7,469.8M567.8,274.6L434.8,181.9M228.1,451.8L408.2,562.8M589.0,327.1L582.3,305.2M576.9,448.8L476.9,193.9M314.6,199.6L532.9,230.2M525.2,223.6L486.1,198.0M561.2,478.0L576.9,448.8M388.6,179.1L592.6,394.5M522.5,520.0L567.8,274.6M562.7,265.9L592.6,350.1M422.0,180.0L219.1,430.2M581.0,439.4L398.3,562.8M212.2,341.0L253.1,250.0M586.4,317.4L593.4,384.3M587.9,416.5L592.6,394.5M567.8,274.6L572.7,457.9M590.7,404.1L592.6,394.5M312.0,540.0L259.2,242.3M589.0,327.1L578.0,295.0M355.2,184.6L567.8,274.6M259.2,242.3L542.3,238.9M566.7,469.8L555.0,255.0M578.0,295.0L592.6,350.1M582.3,305.2L562.7,265.9M220.4,307.9L593.3,360.3M525.2,223.6L422.0,180.0M232.7,461.5L590.8,337.3M592.6,350.1L594.1,371.0M434.8,181.9L314.6,199.6M384.9,562.0L561.2,478.0M592.6,394.5L514.8,526.0M422.0,180.0L542.3,238.9M332.9,550.2L464.6,552.3M498.0,204.2L549.2,247.3M592.6,394.5L408.2,562.8M592.6,350.1L454.6,555.4M572.9,283.8L594.1,371.0M542.3,238.9L444.8,183.7M592.6,394.5L561.2,478.0M224.2,442.9L238.8,472.2M216.6,420.0L364.9,559.2M454.9,186.2L238.8,268.6M467.2,190.3L486.1,198.0M539.6,504.0L303.1,205.0M431.9,560.5L244.6,481.2M375.1,560.8L586.4,317.4M401.7,178.8L411.7,179.1M592.6,350.1L576.9,448.8M476.9,193.9L554.8,486.3M562.7,265.9L593.4,384.3M578.0,295.0L498.0,204.2M549.2,247.3L567.8,274.6M474.0,548.6L506.5,207.3M303.1,205.0L494.1,538.7M229.3,286.4L434.8,181.9M498.0,204.2L549.2,247.3M590.7,404.1L549.2,247.3M525.2,223.6L333.1,191.4M401.7,178.8L582.3,305.2M567.8,274.6L555.0,255.0M364.9,559.2L467.2,190.3M401.7,178.8L266.3,506.7M422.0,180.0L525.2,223.6M572.7,457.9L532.7,511.1M532.9,230.2L566.7,469.8M219.1,430.2L593.3,360.3M422.0,180.0L589.0,327.1M434.8,181.9L224.2,298.4M251.0,489.6L454.9,186.2M567.8,274.6L549.2,247.3M590.7,404.1L467.2,190.3M593.3,360.3L589.0,327.1M398.3,562.8L375.1,560.8M532.9,230.2L593.4,384.3M314.6,199.6L593.3,360.3M546.5,496.5L566.7,469.8M525.2,223.6L516.8,217.4M542.3,238.9L323.9,195.4M566.7,469.8L422.0,180.0M476.9,193.9L312.0,540.0M251.0,489.6L234.4,277.2M498.0,204.2L210.2,374.0M516.8,217.4L314.6,199.6M454.9,186.2L592.6,394.5M589.0,327.1L590.7,404.1M486.1,198.0L532.9,230.2M587.9,416.5L364.9,559.2M486.1,198.0L294.9,211.7M590.8,337.3L522.5,520.0M572.7,457.9L590.8,337.3M219.1,430.2L352.1,556.5M408.2,562.8L562.7,265.9M422.0,180.0L589.0,327.1M238.8,268.6L582.3,305.2M283.7,522.0L494.1,538.7M251.0,489.6L542.3,238.9M590.7,404.1L546.5,496.5M210.7,353.3L486.1,198.0M594.1,371.0L592.6,350.1M444.8,183.7L578.0,295.0M514.8,526.0L586.4,317.4M586.4,317.4L561.2,478.0M594.1,371.0L498.0,204.2M586.4,317.4L434.8,181.9M444.8,183.7L259.2,242.3M364.9,559.2L273.5,513.6M594.1,371.0L555.0,255.0M332.9,550.2L587.9,416.5M590.7,404.1L549.2,247.3M582.3,305.2L210.2,374.0M593.4,384.3L454.9,186.2M594.1,371.0L454.6,555.4M516.8,217.4L268.9,232.9M401.7,178.8L266.3,506.7M498.0,204.2L532.9,230.2M532.9,230.2L219.1,430.2M503.2,533.7L592.6,394.5M549.2,247.3L532.9,230.2M273.5,513.6L238.8,472.2M562.7,265.9L593.4,384.3M532.9,230.2L555.0,255.0M476.9,193.9L532.9,230.2M532.9,230.2L594.1,371.0M486.1,198.0L542.3,238.9M567.8,274.6L352.1,556.5M342.6,553.4L592.6,394.5M210.7,386.8L593.4,384.3M555.0,255.0L572.9,283.8M532.9,230.2L283.7,522.0M539.6,504.0L401.7,178.8M567.8,274.6L572.7,457.9M593.3,360.3L587.9,416.5M594.1,371.0L486.1,198.0M586.4,317.4L210.2,364.0M549.2,247.3L555.0,255.0M586.4,317.4L561.2,478.0M454.9,186.2L333.1,191.4M516.8,217.4L294.9,211.7M592.6,350.1L585.1,426.7M592.6,394.5L589.0,327.1M592.6,394.5L594.1,371.0M566.7,469.8L522.5,520.0M593.4,384.3L590.7,404.1M594.1,371.0L549.2,247.3M572.9,283.8L587.9,416.5M539.6,504.0L210.7,353.3M229.3,286.4L276.0,225.7M590.7,404.1L498.0,204.2M388.6,179.1L539.6,504.0M590.7,404.1L582.3,305.2M514.8,526.0L590.7,404.1M593.3,360.3L594.1,371.0M454.9,186.2L554.8,486.3M582.3,305.2L589.0,327.1M498.0,204.2L422.0,180.0M498.0,204.2L506.5,207.3M546.5,496.5L592.6,350.1M283.7,219.3L293.0,527.9M333.1,191.4L224.2,442.9M586.4,317.4L589.0,327.1M498.0,204.2L467.2,190.3M273.5,513.6L593.3,360.3M589.0,327.1L554.8,486.3M592.6,394.5L422.0,562.0M592.6,394.5L587.9,416.5M273.5,513.6L224.2,442.9M590.8,337.3L476.9,193.9M525.2,223.6L486.1,198.0M592.6,394.5L572.7,457.9M589.0,327.1L408.2,562.8M525.2,223.6L593.3,360.3M562.7,265.9L593.4,384.3M582.3,305.2L532.9,230.2M293.0,527.9L273.5,513.6M586.4,317.4L593.3,360.3M592.6,350.1L593.4,384.3" stroke="#8d8d8d" stroke-width="1.25" fill="none"/>
<circle cx="303.1" cy="205.0" r="5.9" fill="#59b03c"/>
<circle cx="314.6" cy="199.6" r="5.9" fill="#d73229"/>
<circle cx="323.9" cy="195.4" r="5.9" fill="#59b03c"/>
<circle cx="333.1" cy="191.4" r="5.9" fill="#59b03c"/>
<circle cx="345.5" cy="187.3" r="5.9" fill="#59b03c"/>
<circle cx="355.2" cy="184.6" r="5.9" fill="#d73229"/>
<circle cx="365.5" cy="182.2" r="5.9" fill="#59b03c"/>
<circle cx="378.6" cy="180.0" r="5.9" fill="#59b03c"/>
<circle cx="388.6" cy="179.1" r="5.9" fill="#59b03c"/>
<circle cx="401.7" cy="178.8" r="5.9" fill="#d73229"/>
<circle cx="411.7" cy="179.1" r="5.9" fill="#59b03c"/>
<circle cx="422.0" cy="180.0" r="5.9" fill="#d73229"/>
<circle cx="434.8" cy="181.9" r="5.9" fill="#d73229"/>
<circle cx="444.8" cy="183.7" r="5.9" fill="#59b03c"/>
<circle cx="454.9" cy="186.2" r="5.9" fill="#59b03c"/>
<circle cx="467.2" cy="190.3" r="5.9" fill="#d73229"/>
<circle cx="476.9" cy="193.9" r="5.9" fill="#59b03c"/>
<circle cx="486.1" cy="198.0" r="5.9" fill="#59b03c"/>
<circle cx="498.0" cy="204.2" r="5.9" fill="#59b03c"/>
<circle cx="506.5" cy="207.3" r="5.9" fill="#59b03c"/>
<circle cx="516.8" cy="217.4" r="5.9" fill="#59b03c"/>
<circle cx="525.2" cy="223.6" r="5.9" fill="#d73229"/>
<circle cx="532.9" cy="230.2" r="5.9" fill="#59b03c"/>
<circle cx="542.3" cy="238.9" r="5.9" fill="#59b03c"/>
<circle cx="549.2" cy="247.3" r="5.9" fill="#59b03c"/>
<circle cx="555.0" cy="255.0" r="5.9" fill="#d73229"/>
<circle cx="562.7" cy="265.9" r="5.9" fill="#59b03c"/>
<circle cx="567.8" cy="274.6" r="5.9" fill="#d73229"/>
<circle cx="572.9" cy="283.8" r="5.9" fill="#59b03c"/>
<circle cx="578.0" cy="295.0" r="5.9" fill="#d73229"/>
<circle cx="582.3" cy="305.2" r="5.9" fill="#59b03c"/>
<circle cx="586.4" cy="317.4" r="5.9" fill="#59b03c"/>
<circle cx="589.0" cy="327.1" r="5.9" fill="#59b03c"/>
<circle cx="590.8" cy="337.3" r="5.9" fill="#d73229"/>
<circle cx="592.6" cy="350.1" r="5.9" fill="#59b03c"/>
<circle cx="593.3" cy="360.3" r="5.9" fill="#d73229"/>
<circle cx="594.1" cy="371.0" r="5.9" fill="#d73229"/>
<circle cx="593.4" cy="384.3" r="5.9" fill="#59b03c"/>
<circle cx="592.6" cy="394.5" r="5.9" fill="#59b03c"/>
<circle cx="590.7" cy="404.1" r="5.9" fill="#59b03c"/>
<circle cx="587.9" cy="416.5" r="5.9" fill="#59b03c"/>
<circle cx="585.1" cy="426.7" r="5.9" fill="#59b03c"/>
<circle cx="581.0" cy="439.4" r="5.9" fill="#59b03c"/>
<circle cx="576.9" cy="448.8" r="5.9" fill="#d73229"/>
<circle cx="572.7" cy="457.9" r="5.9" fill="#d73229"/>
<circle cx="566.7" cy="469.8" r="5.9" fill="#d73229"/>
<circle cx="561.2" cy="478.0" r="5.9" fill="#d73229"/>
<circle cx="554.8" cy="486.3" r="5.9" fill="#59b03c"/>
<circle cx="546.5" cy="496.5" r="5.9" fill="#59b03c"/>
<circle cx="539.6" cy="504.0" r="5.9" fill="#59b03c"/>
<circle cx="532.7" cy="511.1" r="5.9" fill="#59b03c"/>
<circle cx="522.5" cy="520.0" r="5.9" fill="#59b03c"/>
<circle cx="514.8" cy="526.0" r="5.9" fill="#59b03c"/>
<circle cx="503.2" cy="533.7" r="5.9" fill="#59b03c"/>
<circle cx="494.1" cy="538.7" r="5.9" fill="#59b03c"/>
<circle cx="485.9" cy="543.4" r="5.9" fill="#59b03c"/>
<circle cx="474.0" cy="548.6" r="5.9" fill="#59b03c"/>
<circle cx="464.6" cy="552.3" r="5.9" fill="#59b03c"/>
<circle cx="454.6" cy="555.4" r="5.9" fill="#59b03c"/>
<circle cx="441.7" cy="558.6" r="5.9" fill="#59b03c"/>
<circle cx="431.9" cy="560.5" r="5.9" fill="#59b03c"/>
<circle cx="422.0" cy="562.0" r="5.9" fill="#59b03c"/>
<circle cx="408.2" cy="562.8" r="5.9" fill="#59b03c"/>
<circle cx="398.3" cy="562.8" r="5.9" fill="#59b03c"/>
<circle cx="384.9" cy="562.0" r="5.9" fill="#59b03c"/>
<circle cx="375.1" cy="560.8" r="5.9" fill="#59b03c"/>
<circle cx="364.9" cy="559.2" r="5.9" fill="#59b03c"/>
<circle cx="352.1" cy="556.5" r="5.9" fill="#59b03c"/>
<circle cx="342.6" cy="553.4" r="5.9" fill="#d73229"/>
<circle cx="332.9" cy="550.2" r="5.9" fill="#59b03c"/>
<circle cx="320.6" cy="544.7" r="5.9" fill="#59b03c"/>
<circle cx="312.0" cy="540.0" r="5.9" fill="#59b03c"/>
<circle cx="302.9" cy="535.2" r="5.9" fill="#59b03c"/>
<circle cx="293.0" cy="527.9" r="5.9" fill="#59b03c"/>
<circle cx="283.7" cy="522.0" r="5.9" fill="#59b03c"/>
<circle cx="273.5" cy="513.6" r="5.9" fill="#d73229"/>
<circle cx="266.3" cy="506.7" r="5.9" fill="#d73229"/>
<circle cx="259.2" cy="499.0" r="5.9" fill="#d73229"/>
<circle cx="251.0" cy="489.6" r="5.9" fill="#59b03c"/>
<circle cx="244.6" cy="481.2" r="5.9" fill="#d73229"/>
<circle cx="238.8" cy="472.2" r="5.9" fill="#59b03c"/>
<circle cx="232.7" cy="461.5" r="5.9" fill="#d73229"/>
<circle cx="228.1" cy="451.8" r="5.9" fill="#59b03c"/>
<circle cx="224.2" cy="442.9" r="5.9" fill="#d73229"/>
<circle cx="219.1" cy="430.2" r="5.9" fill="#59b03c"/>
<circle cx="216.6" cy="420.0" r="5.9" fill="#59b03c"/>
<circle cx="213.3" cy="408.0" r="5.9" fill="#59b03c"/>
<circle cx="211.5" cy="397.8" r="5.9" fill="#59b03c"/>
<circle cx="210.7" cy="386.8" r="5.9" fill="#59b03c"/>
<circle cx="210.2" cy="374.0" r="5.9" fill="#59b03c"/>
<circle cx="210.2" cy="364.0" r="5.9" fill="#59b03c"/>
<circle cx="210.7" cy="353.3" r="5.9" fill="#59b03c"/>
<circle cx="212.2" cy="341.0" r="5.9" fill="#59b03c"/>
<circle cx="214.0" cy="330.8" r="5.9" fill="#59b03c"/>
<circle cx="216.6" cy="320.6" r="5.9" fill="#59b03c"/>
<circle cx="220.4" cy="307.9" r="5.9" fill="#59b03c"/>
<circle cx="224.2" cy="298.4" r="5.9" fill="#59b03c"/>
<circle cx="229.3" cy="286.4" r="5.9" fill="#59b03c"/>
<circle cx="234.4" cy="277.2" r="5.9" fill="#59b03c"/>
<circle cx="238.8" cy="268.6" r="5.9" fill="#d73229"/>
<circle cx="246.4" cy="257.6" r="5.9" fill="#d73229"/>
<circle cx="253.1" cy="250.0" r="5.9" fill="#59b03c"/>
<circle cx="259.2" cy="242.3" r="5.9" fill="#59b03c"/>
<circle cx="268.9" cy="232.9" r="5.9" fill="#59b03c"/>
<circle cx="276.0" cy="225.7" r="5.9" fill="#d73229"/>
<circle cx="283.7" cy="219.3" r="5.9" fill="#59b03c"/>
<circle cx="294.9" cy="211.7" r="5.9" fill="#59b03c"/>
<rect x="758" y="178" width="200" height="149" fill="#707050" />
<path d="M758,178 H958 L956,181 H761 V325 L758,327 Z" fill="#ffffff"/>
<rect x="758" y="178" width="199" height="1" fill="#707070" />
<rect x="758" y="178" width="1" height="148" fill="#707070" />
<rect x="761" y="181" width="195" height="144" fill="#e0e0b6" />
<rect x="786" y="196" width="165" height="115" fill="#ffffff" />
<text x="820" y="192" font-size="12" font-family="Liberation Sans" font-weight="bold" fill="#000" textLength="96.0" lengthAdjust="spacingAndGlyphs" >Agent Persuaded</text>
<text x="763" y="210" font-size="11" font-family="Liberation Sans" font-weight="normal" fill="#000" textLength="21.0" lengthAdjust="spacingAndGlyphs" >27.5</text>
<text x="778" y="309" font-size="11" font-family="Liberation Sans" font-weight="normal" fill="#000" textLength="5.0" lengthAdjust="spacingAndGlyphs" >0</text>
<text x="785" y="322" font-size="11" font-family="Liberation Sans" font-weight="normal" fill="#000" textLength="6.0" lengthAdjust="spacingAndGlyphs" >0</text>
<text x="926" y="322" font-size="11" font-family="Liberation Sans" font-weight="normal" fill="#000" textLength="22.0" lengthAdjust="spacingAndGlyphs" >1750</text>
<polyline points="786,307.2 790.5,307.2 790.7,303.4 792.1,303.4 793.5,290.3 794.5,290.3 795.5,269.7 796.4,269.7 797.5,248.6 799,248.6 800.3,240.5 804.5,240.5 805,236.2 805.9,236.2 806.9,219.7 810.3,219.7 811,215.5 811.9,215.5 812.8,206.4 823.1,206.4 823.6,202.4 843.4,202.4 844.1,198.3 925,198.3" fill="none" stroke="#000" stroke-width="1.1"/>
<rect x="721" y="377" width="221" height="59" fill="#4a6e6a" />
<path d="M721,377 H942 L940,380 H724 V434 L721,436 Z" fill="#ffffff"/>
<rect x="721" y="377" width="220" height="1" fill="#707070" />
<rect x="721" y="377" width="1" height="58" fill="#707070" />
<rect x="724" y="380" width="216" height="54" fill="#82bcb7" />
<rect x="727.5" y="403.5" width="209" height="28" fill="#ffffff" stroke="#808080"/>
<text x="727" y="394" font-size="10" font-family="Liberation Sans" font-weight="normal" fill="#111" textLength="14.0" lengthAdjust="spacingAndGlyphs" stroke="#111" stroke-width="0.25">me</text>
<text x="731" y="417" font-size="11" font-family="Liberation Sans" font-weight="normal" fill="#94461e" textLength="19.0" lengthAdjust="spacingAndGlyphs" >103</text>
<rect x="0" y="641" width="1363" height="4" fill="#f0f0f0" />
<rect x="0" y="645" width="1361" height="1" fill="#808080" />
<path d="M4,645 L6.5,642 L9,645 Z M15,642 H21 L18,645 Z" fill="#000"/>
<rect x="0" y="646" width="1361" height="79" fill="#bcbce6" />
<rect x="0" y="646" width="1" height="79" fill="#808080" />
<text x="3" y="659" font-size="11" font-family="Liberation Sans" font-weight="bold" fill="#000" textLength="98.0" lengthAdjust="spacingAndGlyphs" >Command Center</text>
<rect x="1288.5" y="648.5" width="16" height="13" fill="#e1e1e1" stroke="#adadad"/>
<path d="M1292,659 L1301,650 M1297,650 H1301 V654 M1292,655 V659 H1296" fill="none" stroke="#000" stroke-width="2"/>
<rect x="1306.5" y="648.5" width="52" height="13" fill="#e1e1e1" stroke="#adadad"/>
<text x="1321" y="657" font-size="11" font-family="Liberation Sans" font-weight="normal" fill="#000" textLength="22.0" lengthAdjust="spacingAndGlyphs" >Clear</text>
<rect x="2" y="663" width="1358" height="1" fill="#808080" />
<rect x="2.5" y="663.5" width="1357" height="44" fill="#ffffff" stroke="#808080"/>
<rect x="1343" y="664" width="16" height="43" fill="#f0f0f0" />
<path d="M1347,674 L1351,670 L1355,674" fill="none" stroke="#505050" stroke-width="2"/>
<path d="M1347,697 L1351,701 L1355,697" fill="none" stroke="#505050" stroke-width="2"/>
<rect x="1" y="708" width="1359" height="15" fill="#ffffff" />
<rect x="1" y="708" width="53" height="15" fill="#bcbce6" />
<text x="3" y="719" font-size="12" font-family="Liberation Sans" font-weight="normal" fill="#000" textLength="50.0" lengthAdjust="spacingAndGlyphs" >observer&gt;</text>
<rect x="54.5" y="708.5" width="1286" height="14" fill="#ffffff" stroke="#808080"/>
<rect x="1342.5" y="709.5" width="16" height="12" fill="#d0d0d0" stroke="#c4c4c4"/>
<path d="M1346,713 H1354 L1350,718 Z" fill="#000"/>
<rect x="0" y="723" width="1363" height="2" fill="#f0f0f0" />
<rect x="1360" y="641" width="3" height="84" fill="#f0f0f0" />
<rect x="1361" y="64" width="1" height="661" fill="#d9d9d9" />
<rect x="1362" y="64" width="1" height="661" fill="#f0f0f0" />
<rect x="1359" y="646" width="1" height="77" fill="#808080" />
</svg></body></html>
